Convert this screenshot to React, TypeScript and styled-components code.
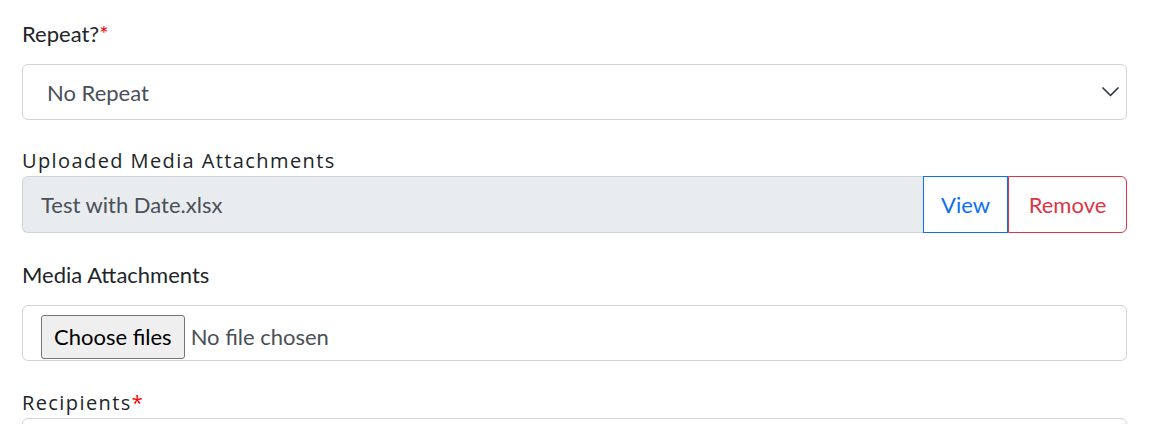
import React from "react";
import styled, { createGlobalStyle } from "styled-components";

const GlobalStyle = createGlobalStyle`
  body {
    margin: 0;
    background: #fff;
    font-family: "Lato", "Liberation Sans", sans-serif;
    color: #212529;
  }
`;

const Form = styled.div`
  padding: 17px 29px 0 22px;
`;

const Field = styled.div<{ $space: number }>`
  margin-bottom: ${(p) => p.$space}px;
`;

const Label = styled.label<{ $alt?: boolean }>`
  display: block;
  font-family: ${(p) => (p.$alt ? `"Open Sans", sans-serif` : `"Lato", sans-serif`)};
  font-size: ${(p) => (p.$alt ? "20px" : "22px")};
  letter-spacing: ${(p) => (p.$alt ? "1.4px" : "0")};
  line-height: ${(p) => (p.$alt ? "31px" : "34px")};
  color: #212529;
  margin-bottom: ${(p) => (p.$alt ? "0px" : "13px")};
`;

const Req = styled.span`
  color: #ff0000;
`;

const SelectBox = styled.div`
  display: flex;
  align-items: center;
  justify-content: space-between;
  height: 56px;
  box-sizing: border-box;
  border: 1px solid #ced4da;
  border-radius: 6px;
  padding: 0 7px 0 24px;
  font-size: 22px;
  color: #495057;
`;

const Group = styled.div`
  display: flex;
  height: 57px;
`;

const ReadOnly = styled.div`
  flex: 1;
  display: flex;
  align-items: center;
  box-sizing: border-box;
  background: #e9ecef;
  border: 1px solid #ced4da;
  border-right: none;
  border-radius: 6px 0 0 6px;
  padding: 0 18px;
  font-size: 22px;
  color: #495057;
`;

const OutlineButton = styled.button<{ $color: string; $last?: boolean; $w: number }>`
  width: ${(p) => p.$w}px;
  box-sizing: border-box;
  background: #fff;
  border: 1px solid ${(p) => p.$color};
  color: ${(p) => p.$color};
  border-radius: ${(p) => (p.$last ? "0 6px 6px 0" : "0")};
  font-family: "Lato", sans-serif;
  font-size: 22px;
  padding: 0;
  cursor: pointer;
`;

const FileBox = styled.div`
  display: flex;
  align-items: flex-end;
  height: 56px;
  box-sizing: border-box;
  border: 1px solid #ced4da;
  border-radius: 6px;
  padding: 0 18px 1px 18px;
`;

const ChooseButton = styled.button`
  height: 44px;
  box-sizing: border-box;
  background: #efefef;
  border: 1px solid #767676;
  border-radius: 3px;
  padding: 0 12px;
  font-family: "Lato", sans-serif;
  font-size: 22px;
  line-height: 42px;
  color: #000;
`;

const FileName = styled.span`
  margin-left: 6px;
  font-size: 22px;
  line-height: 44px;
  color: #495057;
`;

const NextBox = styled.div`
  height: 56px;
  border: 1px solid #ced4da;
  border-radius: 6px;
`;

const Chevron = () => (
  <svg width="17" height="10" viewBox="0 0 17 10" fill="none">
    <path d="M1 1l7.5 7.5L16 1" stroke="#343a40" strokeWidth="1.7" strokeLinecap="round" strokeLinejoin="round" />
  </svg>
);

export default function App() {
  return (
    <Form>
      <GlobalStyle />
      <Field $space={25}>
        <Label>
          Repeat?<Req>*</Req>
        </Label>
        <SelectBox>
          <span>No Repeat</span>
          <Chevron />
        </SelectBox>
      </Field>
      <Field $space={25}>
        <Label $alt>Uploaded Media Attachments</Label>
        <Group>
          <ReadOnly>Test with Date.xlsx</ReadOnly>
          <OutlineButton $color="#0d6efd" $w={85}>
            View
          </OutlineButton>
          <OutlineButton $color="#dc3545" $w={119} $last>
            Remove
          </OutlineButton>
        </Group>
      </Field>
      <Field $space={26}>
        <Label>Media Attachments</Label>
        <FileBox>
          <ChooseButton>Choose files</ChooseButton>
          <FileName>No file chosen</FileName>
        </FileBox>
      </Field>
      <Field $space={0}>
        <Label $alt>
          Recipients<Req>*</Req>
        </Label>
        <NextBox />
      </Field>
    </Form>
  );
}
